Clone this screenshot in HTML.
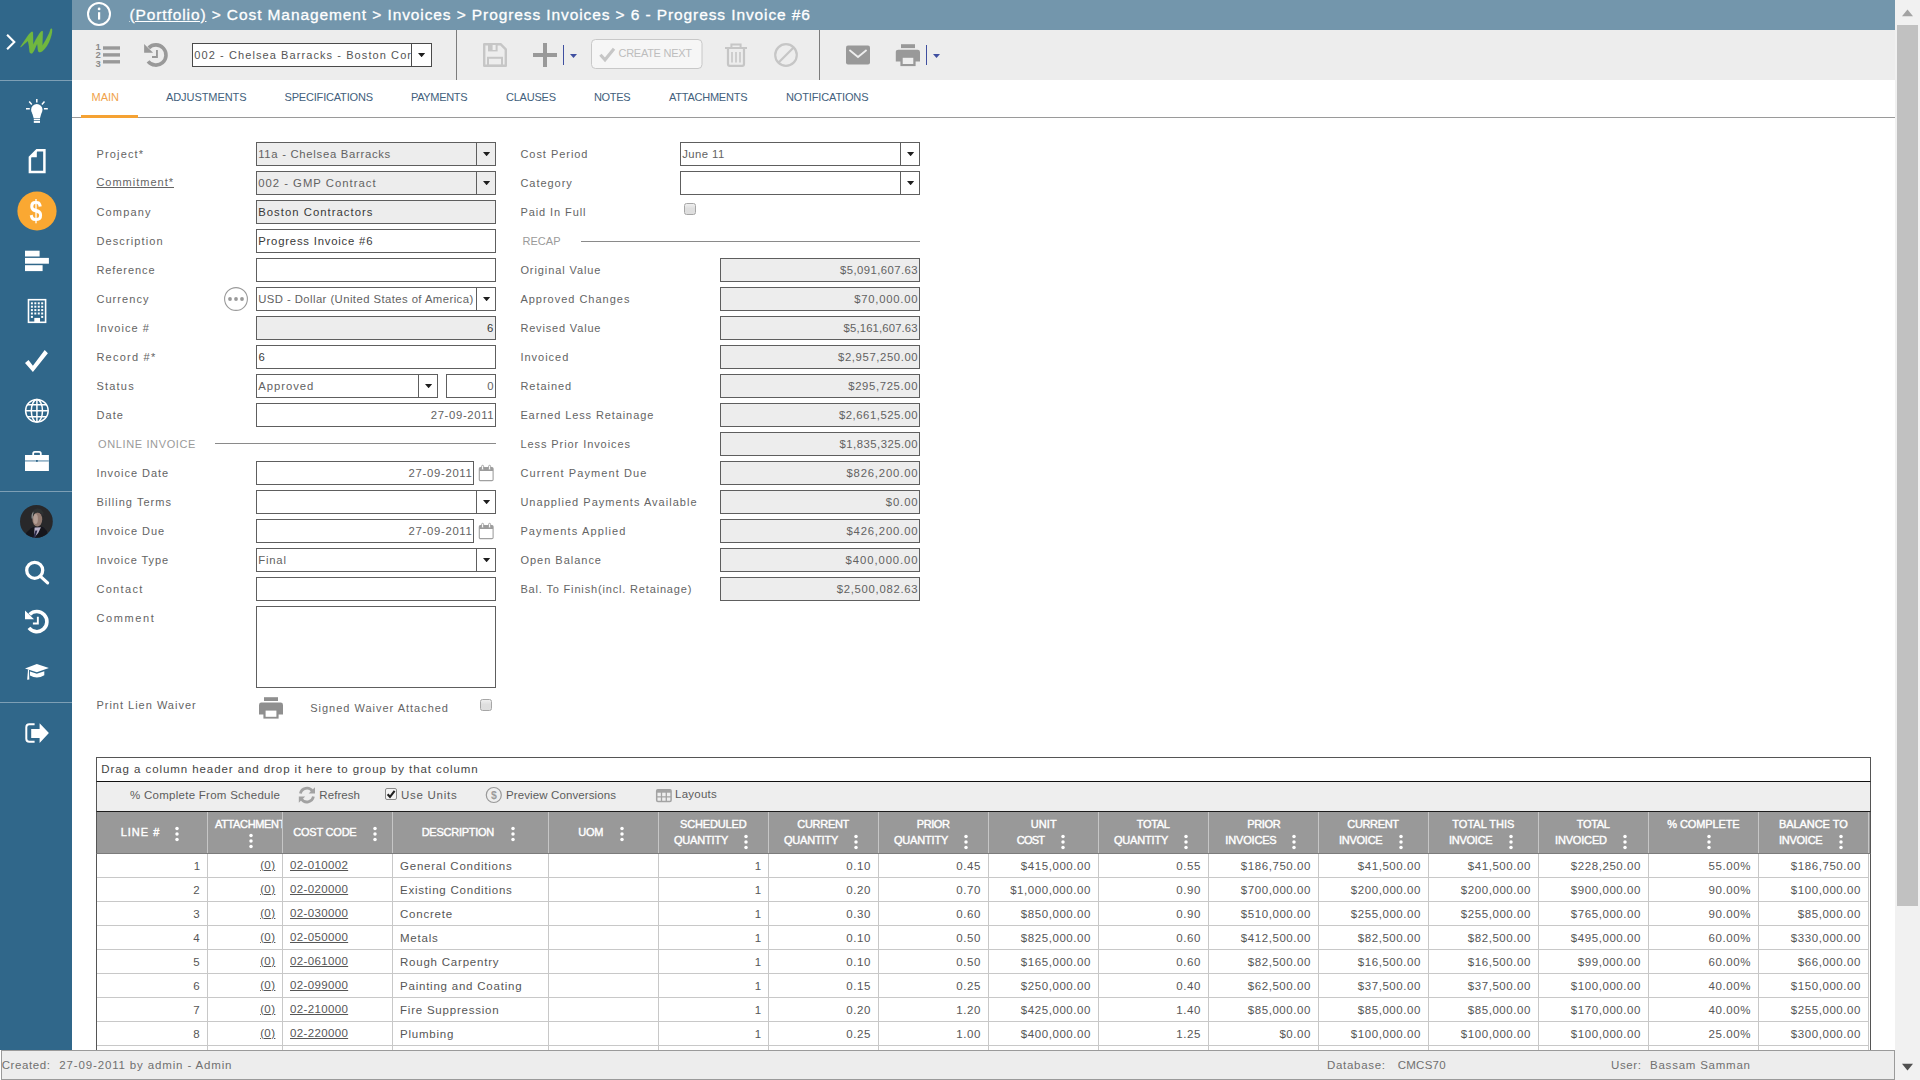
<!DOCTYPE html>
<html lang="en">
<head>
<meta charset="utf-8">
<title>6 - Progress Invoice #6</title>
<style>

html,body{margin:0;padding:0;}
body{width:1920px;height:1080px;overflow:hidden;background:#fff;position:relative;font-family:"Liberation Sans",sans-serif;font-size:12px;color:#555;}
.t{position:absolute;line-height:1;white-space:pre;}
.abs{position:absolute;}
#side{position:absolute;left:0;top:0;width:72px;height:1050px;background:#30678a;}
#side svg{position:absolute;overflow:visible;}
.sdiv{position:absolute;left:0;width:72px;height:1px;background:#7d9fb5;}
#hdr{position:absolute;left:72px;top:0;width:1823px;height:30px;background:#7396ac;}
#tb{position:absolute;left:72px;top:30px;width:1823px;height:50px;background:#ededed;}
#tabs{position:absolute;left:72px;top:80px;width:1823px;height:37px;background:#fff;border-bottom:1px solid #9a9a9a;}
.vsep{position:absolute;top:30px;width:1px;height:50px;background:#7c7c7c;}
.box{position:absolute;box-sizing:border-box;border:1px solid #5e5e5e;background:#fff;height:24px;}
.box.dis{background:#ededed;}
.dd{position:absolute;box-sizing:border-box;right:0;top:0;width:19px;height:22px;border-left:1px solid #5e5e5e;}
.dd:after{content:"";position:absolute;left:5.8px;top:8.8px;width:7.6px;height:4.4px;background:#1e1e1e;clip-path:polygon(0 0,100% 0,50% 100%);}
.hline{position:absolute;height:1px;background:#8a8a8a;}
.cb{position:absolute;box-sizing:border-box;width:12px;height:12px;border:1px solid #a6a6a6;border-radius:2.5px;background:linear-gradient(#efefef,#dfdfdf 45%,#dedede);}
#sb{position:absolute;left:1895px;top:0;width:25px;height:1080px;background:#f1f1f1;}
#sb .th{position:absolute;left:2px;top:25px;width:21px;height:881px;background:#c1c1c1;}
#status{position:absolute;left:1px;top:1050px;width:1894px;height:30px;box-sizing:border-box;background:#ededed;border:1px solid #9a9a9a;}
</style>
</head>
<body>
<div id="side">
<div class="sdiv" style="top:80px"></div><div class="sdiv" style="top:491px"></div><div class="sdiv" style="top:702px"></div>
<svg width="72" height="1050" viewBox="0 0 72 1050" style="left:0;top:0"><path d="M7.1 34.8 L14.3 42 L7.1 49.2" fill="none" stroke="#fff" stroke-width="2.1"/><path d="M20.7 46.2 L28.5 34.7 Q30.2 32.6 31.6 31.8 Q32.9 31.3 33 32.4 L33.1 37 L33.2 44.5 Q35.8 38.8 39.7 32.9 Q41 31.3 42.1 31.1 Q43 31 42.9 32 L42.7 37 L42.4 45.6 Q46.1 39.6 49.1 33.2 Q50 31 50.5 28.9 Q51.3 28.1 52.1 28.9 Q52.3 31 51.9 33.2 Q51.4 36 50.2 39.2 Q48.9 42.8 46.9 46 Q44.8 49.2 42.4 51.2 Q41 52.2 39.7 52.3 Q38.4 52.2 38.1 51 Q37.6 48.6 37.5 46 L37.1 44.1 Q36 46.6 34.9 49 Q33.9 51.4 32.6 52.9 Q31.8 53.5 31.1 53.4 Q30 53.2 29.6 52.2 Q29.1 49.2 28.9 46 L27.9 41.1 Q26.2 42.7 24.4 44.1 Q22.6 45.8 20.9 47.3 Q20 47.2 20.7 46.2 Z" fill="#70b73f" stroke="#70b73f" stroke-width="0.15" stroke-linejoin="round"/><g fill="#fff" stroke="none"><circle cx="36.8" cy="109.8" r="5.7"/><path d="M32 112.4 L41.6 112.4 L40 118.2 L33.7 118.2 Z"/><rect x="33.8" y="118.8" width="6.2" height="1.4"/><rect x="33.8" y="120.9" width="6.2" height="2"/></g><g stroke="#fff" stroke-width="1.5" fill="none"><path d="M36.8 99 V102.6 M26 108.8 H29.8 M43.9 108.8 H47.8 M29.2 101.6 L31.8 104.4 M44.5 101.6 L41.9 104.4"/></g><path d="M29.9 172 H44.4 V150.2 H36.9 L29.9 157.2 Z" fill="none" stroke="#fff" stroke-width="2.5" stroke-linejoin="miter"/><path d="M30.4 157.2 H36.8 V150.8 Z" fill="#fff"/><circle cx="37" cy="211" r="19.6" fill="#faa832"/><g fill="#fff"><rect x="25" y="250.7" width="14.6" height="5.8"/><rect x="25" y="257.9" width="23.9" height="5.8"/><rect x="25" y="265.2" width="17.6" height="5.9"/></g><g><rect x="28.5" y="299.7" width="17.1" height="22.6" fill="none" stroke="#fff" stroke-width="1.6"/><rect x="30.90" y="302.30" width="2" height="2" fill="#fff"/><rect x="34.33" y="302.30" width="2" height="2" fill="#fff"/><rect x="37.76" y="302.30" width="2" height="2" fill="#fff"/><rect x="41.19" y="302.30" width="2" height="2" fill="#fff"/><rect x="30.90" y="305.70" width="2" height="2" fill="#fff"/><rect x="34.33" y="305.70" width="2" height="2" fill="#fff"/><rect x="37.76" y="305.70" width="2" height="2" fill="#fff"/><rect x="41.19" y="305.70" width="2" height="2" fill="#fff"/><rect x="30.90" y="309.10" width="2" height="2" fill="#fff"/><rect x="34.33" y="309.10" width="2" height="2" fill="#fff"/><rect x="37.76" y="309.10" width="2" height="2" fill="#fff"/><rect x="41.19" y="309.10" width="2" height="2" fill="#fff"/><rect x="30.90" y="312.50" width="2" height="2" fill="#fff"/><rect x="34.33" y="312.50" width="2" height="2" fill="#fff"/><rect x="37.76" y="312.50" width="2" height="2" fill="#fff"/><rect x="41.19" y="312.50" width="2" height="2" fill="#fff"/><rect x="30.90" y="315.90" width="2" height="2" fill="#fff"/><rect x="41.19" y="315.90" width="2" height="2" fill="#fff"/><rect x="34.3" y="317.9" width="5.7" height="4.6" fill="#fff"/></g><path d="M25 362.9 L32.9 372 L47.9 353.2 L44.7 350.1 L32.9 365.7 L28.5 360.1 Z" fill="#fff"/><g fill="none" stroke="#fff" stroke-width="1.5"><circle cx="36.9" cy="410.8" r="11.3"/><ellipse cx="36.9" cy="410.8" rx="5.6" ry="11.3"/><path d="M36.9 399.5 V422.1 M25.6 410.8 H48.2 M27.4 404.8 H46.4 M27.4 416.8 H46.4"/></g><g><rect x="25" y="455" width="23.9" height="16" fill="#fff"/><path d="M33.2 455 V453.4 Q33.2 451.8 34.8 451.8 H39.2 Q40.8 451.8 40.8 453.4 V455" fill="none" stroke="#fff" stroke-width="1.8"/><rect x="25" y="460.1" width="23.9" height="1.6" fill="#8fb0c5"/><rect x="36" y="460" width="1.8" height="1.8" fill="#30678a"/></g><g><defs><filter id="avb" x="-20%" y="-20%" width="140%" height="140%"><feGaussianBlur stdDeviation="0.6"/></filter><clipPath id="avc"><circle cx="36.4" cy="521.4" r="16.4"/></clipPath></defs><circle cx="36.4" cy="521.4" r="16.4" fill="#28282a"/><g clip-path="url(#avc)"><g filter="url(#avb)"><path d="M24 540 Q26 529.5 34 527 L41.5 526.5 Q48 529 49.5 540 Z" fill="#13131d"/><path d="M34.6 527.6 L41 527.2 L38.2 533 L34 538 Z" fill="#b9b2c8"/><path d="M35.4 530.4 L37.4 530.6 L35 538 L33 538 Z" fill="#2b2948"/><ellipse cx="37.3" cy="519.4" rx="4.9" ry="7.2" fill="#927a70"/><ellipse cx="35.6" cy="519" rx="2.3" ry="5" fill="#c2aea4" opacity="0.7"/><path d="M31.4 518 Q30.6 509.4 37.6 508.6 Q44 508.8 43.4 516.4 Q41.4 512.4 37.4 512.6 Q33.6 512.6 32.6 518.6 Z" fill="#2e3133"/><path d="M31.6 518.6 Q31 513.2 33.6 511.4 Q32.8 514.6 32.8 518.8 Z" fill="#8d9090"/></g></g></g><g fill="none" stroke="#fff"><circle cx="34.7" cy="570.3" r="8" stroke-width="3.3"/><path d="M41 576.9 L47.6 582.9" stroke-width="3.2" stroke-linecap="round"/></g><g><path d="M29.66 614.46 A10.1 10.1 0 1 1 28.95 627.96" fill="none" stroke="#fff" stroke-width="3.6"/><path d="M25.00 610.50 V619.30 H34.00 Z" fill="#fff"/><path d="M37.85 616.70 V623.55 H32.90" fill="none" stroke="#fff" stroke-width="1.9"/></g><g fill="#fff"><path d="M25 668.4 L36.8 664 L48.9 667.9 L36.8 672.2 Z"/><path d="M30 671.4 L36.8 673.8 L44.3 671.2 V675.2 Q37 679.6 30 675.4 Z"/><path d="M28 669.4 L29 669.8 L29.3 679.4 L27.2 679.8 Z"/></g><g><path d="M34.6 724.3 H29.3 Q26.3 724.3 26.3 727.3 V738.8 Q26.3 741.8 29.3 741.8 H34.6" fill="none" stroke="#fff" stroke-width="2"/><path d="M31.2 728.9 H39.6 V723.3 L48.9 733.1 L39.6 742.9 V737.9 H31.2 Z" fill="#fff"/></g></svg>
<span class="t" style="left:28.04px;top:197.1px;font-size:29px;color:#fff;font-weight:700;transform:scaleX(0.8);transform-origin:50% 50%;">$</span>
</div>
<div id="hdr"></div><div id="tb"></div><div id="tabs"></div>
<svg class="abs" style="left:86px;top:1px" width="26" height="26" viewBox="86 1 26 26"><circle cx="99" cy="14" r="11" fill="none" stroke="#fff" stroke-width="2"/><rect x="98" y="12.2" width="2.2" height="7.4" fill="#fff"/><circle cx="99.1" cy="8.9" r="1.4" fill="#fff"/></svg>
<div class="t" style="left:129.4px;top:7px;font-size:15.5px;color:#fff;letter-spacing:0.902px;-webkit-text-stroke:0.3px #fff"><span style="text-decoration:underline">(Portfolio)</span> &gt; Cost Management &gt; Invoices &gt; Progress Invoices &gt; 6 - Progress Invoice #6</div>
<svg class="abs" style="left:72px;top:30px" width="900" height="50" viewBox="72 30 900 50"><g fill="#999"><rect x="103" y="46.3" width="17" height="3.4"/><rect x="103" y="53.2" width="17" height="3.4"/><rect x="103" y="60.1" width="17" height="3.4"/></g><g><path d="M148.76 47.86 A10.1 10.1 0 1 1 148.05 61.36" fill="none" stroke="#999" stroke-width="3.6"/><path d="M144.10 43.90 V52.70 H153.10 Z" fill="#999"/><path d="M156.95 50.10 V56.95 H152.00" fill="none" stroke="#999" stroke-width="1.9"/></g><g><path d="M484.2 44.2 H500.6 L505.8 49.4 V65.8 H484.2 Z" fill="none" stroke="#c6c6c6" stroke-width="2.4" stroke-linejoin="round"/><rect x="488" y="44.2" width="9.6" height="7.2" fill="#c6c6c6"/><rect x="492.6" y="45" width="3" height="5" fill="#eee"/><rect x="488" y="57.8" width="14" height="8" fill="none" stroke="#c6c6c6" stroke-width="2"/></g><path d="M543 43 H547 V53 H557 V57 H547 V67 H543 V57 H533 V53 H543 Z" fill="#999"/><rect x="563" y="45" width="1" height="20" fill="#3f4fa0"/><path d="M570 54 H577 L573.5 58 Z" fill="#3f4fa0"/><rect x="591.5" y="39.5" width="110.5" height="29" rx="4" fill="#f6f6f6" stroke="#c8c8c8"/><path d="M600.4 54.8 L605 59.8 L614 48.8" fill="none" stroke="#c6c6c6" stroke-width="3.1"/><g fill="none" stroke="#c6c6c6"><path d="M725 48 H747" stroke-width="2"/><path d="M731.4 47.6 V44.6 H740.6 V47.6" stroke-width="2"/><path d="M728 48.4 V64 Q728 65.8 729.8 65.8 H742.2 Q744 65.8 744 64 V48.4" stroke-width="2.2"/><path d="M732 52 V62.4 M736 52 V62.4 M740 52 V62.4" stroke-width="1.6"/></g><g fill="none" stroke="#c6c6c6" stroke-width="2.2"><circle cx="786" cy="55" r="10.8"/><path d="M778.6 62.6 L793.6 47.4"/></g><g><rect x="846" y="45.6" width="24" height="18.8" rx="2" fill="#999"/><path d="M849.4 50 L858 57 L866.6 50" fill="none" stroke="#eee" stroke-width="1.8"/></g><g fill="#999"><rect x="901" y="44.2" width="14" height="3.9"/><path d="M898.4 49.7 H917.6 Q920 49.7 920 52.1 V61.6 H895.8 V52.1 Q895.8 49.7 898.4 49.7 Z"/><rect x="900.4" y="56.2" width="15.2" height="9.9"/></g><rect x="902.7" y="57.8" width="10.6" height="6.2" fill="#eee"/><rect x="926" y="45" width="1" height="20" fill="#3f4fa0"/><path d="M933 54 H940 L936.5 58 Z" fill="#3f4fa0"/></svg>
<div class="vsep" style="left:456px"></div><div class="vsep" style="left:819px"></div>
<span class="t" style="left:95.60px;top:41.6px;font-size:9.5px;color:#8c8c8c;font-weight:700;">1</span>
<span class="t" style="left:95.60px;top:50.2px;font-size:9.5px;color:#8c8c8c;font-weight:700;">2</span>
<span class="t" style="left:95.60px;top:59px;font-size:9.5px;color:#8c8c8c;font-weight:700;">3</span>
<span class="t" style="left:618.50px;top:48px;font-size:11px;color:#bdbdbd;letter-spacing:-0.270px;">CREATE NEXT</span>
<div class="box" style="left:192px;top:43px;width:240px;height:24px;border-color:#4a4a4a"><div class="dd" style="border-color:#4a4a4a;width:20px"></div></div>
<span class="t" style="left:194.30px;top:50px;font-size:11px;color:#555;letter-spacing:1.087px;">002 - Chelsea Barracks - Boston Cor</span>
<span class="t" style="left:91.50px;top:92px;font-size:11px;color:#f0a24a;">MAIN</span>
<span class="t" style="left:166.00px;top:92px;font-size:11px;color:#42607c;letter-spacing:-0.078px;">ADJUSTMENTS</span>
<span class="t" style="left:284.50px;top:92px;font-size:11px;color:#42607c;letter-spacing:-0.182px;">SPECIFICATIONS</span>
<span class="t" style="left:411.00px;top:92px;font-size:11px;color:#42607c;letter-spacing:-0.340px;">PAYMENTS</span>
<span class="t" style="left:506.00px;top:92px;font-size:11px;color:#42607c;letter-spacing:-0.226px;">CLAUSES</span>
<span class="t" style="left:594.00px;top:92px;font-size:11px;color:#42607c;letter-spacing:-0.349px;">NOTES</span>
<span class="t" style="left:669.00px;top:92px;font-size:11px;color:#42607c;letter-spacing:-0.237px;">ATTACHMENTS</span>
<span class="t" style="left:786.00px;top:92px;font-size:11px;color:#42607c;letter-spacing:-0.136px;">NOTIFICATIONS</span>
<div class="abs" style="left:81px;top:115px;width:57px;height:2.5px;background:#f5a233"></div>
<div id="sb"><div class="th"></div><svg class="abs" style="left:0;top:0" width="25" height="1080" viewBox="0 0 25 1080"><path d="M7 16.2 L12.5 9.6 L18 16.2 Z" fill="#a3a3a3"/><path d="M7 1063.8 L12.5 1070.4 L18 1063.8 Z" fill="#505050"/></svg></div>
<div id="status"></div>
<span class="t" style="left:1.70px;top:1060px;font-size:11.5px;color:#707070;letter-spacing:0.599px;">Created:</span>
<span class="t" style="left:59.30px;top:1060px;font-size:11.5px;color:#707070;letter-spacing:0.853px;">27-09-2011 by admin - Admin</span>
<span class="t" style="left:1327.00px;top:1060px;font-size:11.5px;color:#707070;letter-spacing:0.697px;">Database:</span>
<span class="t" style="left:1397.70px;top:1060px;font-size:11.5px;color:#707070;letter-spacing:0.269px;">CMCS70</span>
<span class="t" style="left:1611.00px;top:1060px;font-size:11.5px;color:#707070;letter-spacing:0.631px;">User:</span>
<span class="t" style="left:1650.00px;top:1060px;font-size:11.5px;color:#707070;letter-spacing:0.770px;">Bassam Samman</span>
<span class="t" style="left:96.40px;top:149px;font-size:11px;color:#646464;letter-spacing:1.169px;">Project*</span>
<span class="t" style="left:96.40px;top:177px;font-size:11px;color:#646464;letter-spacing:0.998px;text-decoration:underline;">Commitment*</span>
<span class="t" style="left:96.40px;top:207px;font-size:11px;color:#646464;letter-spacing:1.187px;">Company</span>
<span class="t" style="left:96.40px;top:236px;font-size:11px;color:#646464;letter-spacing:1.128px;">Description</span>
<span class="t" style="left:96.40px;top:265px;font-size:11px;color:#646464;letter-spacing:0.931px;">Reference</span>
<span class="t" style="left:96.40px;top:294px;font-size:11px;color:#646464;letter-spacing:1.082px;">Currency</span>
<span class="t" style="left:96.40px;top:323px;font-size:11px;color:#646464;letter-spacing:1.059px;">Invoice #</span>
<span class="t" style="left:96.40px;top:352px;font-size:11px;color:#646464;letter-spacing:1.236px;">Record #*</span>
<span class="t" style="left:96.40px;top:381px;font-size:11px;color:#646464;letter-spacing:1.223px;">Status</span>
<span class="t" style="left:96.40px;top:410px;font-size:11px;color:#646464;letter-spacing:1.121px;">Date</span>
<span class="t" style="left:96.40px;top:468px;font-size:11px;color:#646464;letter-spacing:0.960px;">Invoice Date</span>
<span class="t" style="left:96.40px;top:497px;font-size:11px;color:#646464;letter-spacing:1.037px;">Billing Terms</span>
<span class="t" style="left:96.40px;top:526px;font-size:11px;color:#646464;letter-spacing:0.961px;">Invoice Due</span>
<span class="t" style="left:96.40px;top:555px;font-size:11px;color:#646464;letter-spacing:0.922px;">Invoice Type</span>
<span class="t" style="left:96.40px;top:584px;font-size:11px;color:#646464;letter-spacing:1.332px;">Contact</span>
<span class="t" style="left:96.40px;top:613px;font-size:11px;color:#646464;letter-spacing:1.620px;">Comment</span>
<span class="t" style="left:96.40px;top:700px;font-size:11px;color:#646464;letter-spacing:0.997px;">Print Lien Waiver</span>
<div class="box dis" style="left:256px;top:142px;width:240px;height:24px"><div class="dd"></div></div>
<span class="t" style="left:258.20px;top:149px;font-size:11.3px;color:#626262;letter-spacing:0.708px;">11a - Chelsea Barracks</span>
<div class="box dis" style="left:256px;top:171px;width:240px;height:24px"><div class="dd"></div></div>
<span class="t" style="left:258.20px;top:178px;font-size:11.3px;color:#626262;letter-spacing:1.007px;">002 - GMP Contract</span>
<div class="box dis" style="left:256px;top:200px;width:240px;height:24px"></div>
<span class="t" style="left:258.20px;top:207px;font-size:11.3px;color:#383838;letter-spacing:1.034px;">Boston Contractors</span>
<div class="box" style="left:256px;top:229px;width:240px;height:24px"></div>
<span class="t" style="left:258.20px;top:236px;font-size:11.3px;color:#383838;letter-spacing:0.802px;">Progress Invoice #6</span>
<div class="box" style="left:256px;top:258px;width:240px;height:24px"></div>
<svg class="abs" style="left:222px;top:286px" width="28" height="26" viewBox="222 286 28 26"><circle cx="236" cy="299" r="11.4" fill="#fff" stroke="#9a9a9a" stroke-width="1.1"/><circle cx="230" cy="299" r="1.9" fill="#999"/><circle cx="236" cy="299" r="1.9" fill="#999"/><circle cx="242" cy="299" r="1.9" fill="#999"/></svg>
<div class="box" style="left:256px;top:287px;width:240px;height:24px"><div class="dd"></div></div>
<span class="t" style="left:258.20px;top:294px;font-size:11.3px;color:#626262;letter-spacing:0.436px;">USD - Dollar (United States of America)</span>
<div class="box dis" style="left:256px;top:316px;width:240px;height:24px"></div>
<span class="t" style="left:487.02px;top:323px;font-size:11.3px;color:#383838;">6</span>
<div class="box" style="left:256px;top:345px;width:240px;height:24px"></div>
<span class="t" style="left:258.60px;top:352px;font-size:11.3px;color:#383838;">6</span>
<div class="box" style="left:256px;top:374px;width:182px;height:24px"><div class="dd"></div></div>
<span class="t" style="left:258.20px;top:381px;font-size:11.3px;color:#626262;letter-spacing:0.975px;">Approved</span>
<div class="box" style="left:446px;top:374px;width:50px;height:24px"></div>
<span class="t" style="left:487.22px;top:381px;font-size:11.3px;color:#626262;">0</span>
<div class="box" style="left:256px;top:403px;width:240px;height:24px"></div>
<span class="t" style="left:430.70px;top:410px;font-size:11.3px;color:#626262;letter-spacing:0.659px;">27-09-2011</span>
<span class="t" style="left:98.00px;top:439px;font-size:11px;color:#9a9a9a;letter-spacing:0.628px;">ONLINE INVOICE</span>
<div class="hline" style="left:215px;top:443px;width:281px"></div>
<div class="box" style="left:256px;top:461px;width:218px;height:24px"></div>
<span class="t" style="left:408.60px;top:468px;font-size:11.3px;color:#626262;letter-spacing:0.693px;">27-09-2011</span>
<svg class="abs" style="left:478px;top:464px" width="16" height="18" viewBox="0 0 16 18"><rect x="1.3" y="3.6" width="13.8" height="13" rx="1.2" fill="#fff" stroke="#a0a0a0" stroke-width="1.1"/><path d="M1.3 4.8 Q1.3 3.6 2.5 3.6 H13.9 Q15.1 3.6 15.1 4.8 V7 H1.3 Z" fill="#9c9c9c"/><rect x="3.6" y="1.3" width="2" height="4.6" rx="1" fill="#fff" stroke="#9c9c9c" stroke-width="0.9"/><rect x="10.6" y="1.3" width="2" height="4.6" rx="1" fill="#fff" stroke="#9c9c9c" stroke-width="0.9"/></svg>
<div class="box" style="left:256px;top:490px;width:240px;height:24px"><div class="dd"></div></div>
<div class="box" style="left:256px;top:519px;width:218px;height:24px"></div>
<span class="t" style="left:408.60px;top:526px;font-size:11.3px;color:#626262;letter-spacing:0.693px;">27-09-2011</span>
<svg class="abs" style="left:478px;top:522px" width="16" height="18" viewBox="0 0 16 18"><rect x="1.3" y="3.6" width="13.8" height="13" rx="1.2" fill="#fff" stroke="#a0a0a0" stroke-width="1.1"/><path d="M1.3 4.8 Q1.3 3.6 2.5 3.6 H13.9 Q15.1 3.6 15.1 4.8 V7 H1.3 Z" fill="#9c9c9c"/><rect x="3.6" y="1.3" width="2" height="4.6" rx="1" fill="#fff" stroke="#9c9c9c" stroke-width="0.9"/><rect x="10.6" y="1.3" width="2" height="4.6" rx="1" fill="#fff" stroke="#9c9c9c" stroke-width="0.9"/></svg>
<div class="box" style="left:256px;top:548px;width:240px;height:24px"><div class="dd"></div></div>
<span class="t" style="left:258.20px;top:555px;font-size:11.3px;color:#626262;letter-spacing:0.827px;">Final</span>
<div class="box" style="left:256px;top:577px;width:240px;height:24px"></div>
<div class="box" style="left:256px;top:606px;width:240px;height:82px"></div>
<svg class="abs" style="left:257px;top:696px" width="28" height="24" viewBox="257 696 28 24"><g fill="#8f8f8f"><rect x="264" y="697.2" width="14" height="3.8"/><path d="M261.4 702.6 H280.6 Q283 702.6 283 705 V714.4 H259 V705 Q259 702.6 261.4 702.6 Z"/><rect x="263.4" y="709.4" width="15.2" height="9.2"/></g><rect x="265.6" y="710.6" width="10.8" height="6.2" fill="#fff"/></svg>
<span class="t" style="left:310.20px;top:703px;font-size:11px;color:#646464;letter-spacing:0.991px;">Signed Waiver Attached</span>
<div class="cb" style="left:480px;top:699px"></div>
<span class="t" style="left:520.40px;top:149px;font-size:11px;color:#646464;letter-spacing:0.963px;">Cost Period</span>
<span class="t" style="left:520.40px;top:178px;font-size:11px;color:#646464;letter-spacing:0.966px;">Category</span>
<span class="t" style="left:520.40px;top:207px;font-size:11px;color:#646464;letter-spacing:0.916px;">Paid In Full</span>
<span class="t" style="left:520.40px;top:265px;font-size:11px;color:#646464;letter-spacing:0.909px;">Original Value</span>
<span class="t" style="left:520.40px;top:294px;font-size:11px;color:#646464;letter-spacing:0.988px;">Approved Changes</span>
<span class="t" style="left:520.40px;top:323px;font-size:11px;color:#646464;letter-spacing:0.832px;">Revised Value</span>
<span class="t" style="left:520.40px;top:352px;font-size:11px;color:#646464;letter-spacing:0.990px;">Invoiced</span>
<span class="t" style="left:520.40px;top:381px;font-size:11px;color:#646464;letter-spacing:0.967px;">Retained</span>
<span class="t" style="left:520.40px;top:410px;font-size:11px;color:#646464;letter-spacing:0.896px;">Earned Less Retainage</span>
<span class="t" style="left:520.40px;top:439px;font-size:11px;color:#646464;letter-spacing:0.926px;">Less Prior Invoices</span>
<span class="t" style="left:520.40px;top:468px;font-size:11px;color:#646464;letter-spacing:1.090px;">Current Payment Due</span>
<span class="t" style="left:520.40px;top:497px;font-size:11px;color:#646464;letter-spacing:1.030px;">Unapplied Payments Available</span>
<span class="t" style="left:520.40px;top:526px;font-size:11px;color:#646464;letter-spacing:1.130px;">Payments Applied</span>
<span class="t" style="left:520.40px;top:555px;font-size:11px;color:#646464;letter-spacing:0.989px;">Open Balance</span>
<span class="t" style="left:520.40px;top:584px;font-size:11px;color:#646464;letter-spacing:0.836px;">Bal. To Finish(incl. Retainage)</span>
<div class="box" style="left:680px;top:142px;width:240px;height:24px"><div class="dd"></div></div>
<span class="t" style="left:682.30px;top:149px;font-size:11.3px;color:#626262;letter-spacing:0.421px;">June 11</span>
<div class="box" style="left:680px;top:171px;width:240px;height:24px"><div class="dd"></div></div>
<div class="cb" style="left:684px;top:203px"></div>
<span class="t" style="left:522.40px;top:236px;font-size:11px;color:#9a9a9a;letter-spacing:0.050px;">RECAP</span>
<div class="hline" style="left:581px;top:241px;width:339px"></div>
<div class="box dis" style="left:720px;top:258px;width:200px;height:24px"></div>
<span class="t" style="left:840.10px;top:265px;font-size:11.3px;color:#626262;letter-spacing:0.436px;">$5,091,607.63</span>
<div class="box dis" style="left:720px;top:287px;width:200px;height:24px"></div>
<span class="t" style="left:854.20px;top:294px;font-size:11.3px;color:#626262;letter-spacing:0.760px;">$70,000.00</span>
<div class="box dis" style="left:720px;top:316px;width:200px;height:24px"></div>
<span class="t" style="left:843.60px;top:323px;font-size:11.3px;color:#626262;letter-spacing:0.145px;">$5,161,607.63</span>
<div class="box dis" style="left:720px;top:345px;width:200px;height:24px"></div>
<span class="t" style="left:838.10px;top:352px;font-size:11.3px;color:#626262;letter-spacing:0.603px;">$2,957,250.00</span>
<div class="box dis" style="left:720px;top:374px;width:200px;height:24px"></div>
<span class="t" style="left:848.20px;top:381px;font-size:11.3px;color:#626262;letter-spacing:0.656px;">$295,725.00</span>
<div class="box dis" style="left:720px;top:403px;width:200px;height:24px"></div>
<span class="t" style="left:839.00px;top:410px;font-size:11.3px;color:#626262;letter-spacing:0.528px;">$2,661,525.00</span>
<div class="box dis" style="left:720px;top:432px;width:200px;height:24px"></div>
<span class="t" style="left:839.60px;top:439px;font-size:11.3px;color:#626262;letter-spacing:0.478px;">$1,835,325.00</span>
<div class="box dis" style="left:720px;top:461px;width:200px;height:24px"></div>
<span class="t" style="left:846.40px;top:468px;font-size:11.3px;color:#626262;letter-spacing:0.836px;">$826,200.00</span>
<div class="box dis" style="left:720px;top:490px;width:200px;height:24px"></div>
<span class="t" style="left:885.80px;top:497px;font-size:11.3px;color:#626262;letter-spacing:0.880px;">$0.00</span>
<div class="box dis" style="left:720px;top:519px;width:200px;height:24px"></div>
<span class="t" style="left:846.40px;top:526px;font-size:11.3px;color:#626262;letter-spacing:0.836px;">$426,200.00</span>
<div class="box dis" style="left:720px;top:548px;width:200px;height:24px"></div>
<span class="t" style="left:845.60px;top:555px;font-size:11.3px;color:#626262;letter-spacing:0.916px;">$400,000.00</span>
<div class="box dis" style="left:720px;top:577px;width:200px;height:24px"></div>
<span class="t" style="left:836.70px;top:584px;font-size:11.3px;color:#626262;letter-spacing:0.720px;">$2,500,082.63</span>
<div class="abs" style="left:96px;top:757px;width:1775px;height:25px;box-sizing:border-box;border:1px solid #555;border-bottom:1px solid #111;background:#fff"></div>
<span class="t" style="left:101.30px;top:764px;font-size:11.5px;color:#444;letter-spacing:0.925px;">Drag a column header and drop it here to group by that column</span>
<div class="abs" style="left:96px;top:782px;width:1775px;height:29px;box-sizing:border-box;border-left:1px solid #555;border-right:1px solid #555;background:#eeeeee"></div>
<span class="t" style="left:130.00px;top:790px;font-size:11.5px;color:#5c5c5c;letter-spacing:0.269px;">% Complete From Schedule</span>
<svg class="abs" style="left:298px;top:786px" width="18" height="18" viewBox="298 786 18 18"><g fill="none" stroke="#a2a2a2" stroke-width="2.8"><path d="M300.4 793.6 A6.6 6.6 0 0 1 312.4 791.2"/><path d="M313.4 796.6 A6.6 6.6 0 0 1 301.4 799"/></g><path d="M315 787.2 V793.6 H308.6 Z" fill="#a2a2a2"/><path d="M298.8 802.8 V796.4 H305.2 Z" fill="#a2a2a2"/></svg>
<span class="t" style="left:319.30px;top:790px;font-size:11.5px;color:#5c5c5c;letter-spacing:0.072px;">Refresh</span>
<div class="abs" style="left:385px;top:788px;width:12px;height:12px;box-sizing:border-box;border:1px solid #8a8a8a;border-radius:2px;background:#f4f4f4"></div>
<svg class="abs" style="left:385px;top:788px" width="12" height="12" viewBox="0 0 12 12"><path d="M2.6 6.2 L5 8.8 L9.6 2.8" fill="none" stroke="#222" stroke-width="2.1"/></svg>
<span class="t" style="left:401.00px;top:790px;font-size:11.5px;color:#5c5c5c;letter-spacing:0.732px;">Use Units</span>
<svg class="abs" style="left:485px;top:786px" width="18" height="18" viewBox="485 786 18 18"><circle cx="493.8" cy="795" r="7.5" fill="none" stroke="#999" stroke-width="1.2"/></svg>
<span class="t" style="left:490.88px;top:789.8px;font-size:10.5px;color:#9a9a9a;font-weight:700;">$</span>
<span class="t" style="left:506.00px;top:790px;font-size:11.5px;color:#5c5c5c;letter-spacing:0.110px;">Preview Conversions</span>
<svg class="abs" style="left:655px;top:788px" width="18" height="15" viewBox="655 788 18 15"><rect x="656.7" y="789.7" width="14.4" height="11.8" rx="1.2" fill="none" stroke="#a3a3a3" stroke-width="1.5"/><rect x="656.7" y="789.7" width="14.4" height="3" fill="#a3a3a3"/><path d="M656.6 796.9 H671.2 M661.5 792 V801.4 M666.3 792 V801.4" stroke="#a3a3a3" stroke-width="1.3" fill="none"/></svg>
<span class="t" style="left:675.00px;top:789px;font-size:11.5px;color:#5c5c5c;letter-spacing:0.237px;">Layouts</span>
<div class="abs" style="left:96px;top:811px;width:1775px;height:43px;box-sizing:border-box;border-left:1px solid #555;border-right:1px solid #555;border-top:1px solid #1c1c1c;border-bottom:1px solid #7c7c7c;background:#999"></div>
<div class="abs" style="left:207px;top:812px;width:1px;height:41px;background:#c6c6c6"></div>
<div class="abs" style="left:282px;top:812px;width:1px;height:41px;background:#c6c6c6"></div>
<div class="abs" style="left:392px;top:812px;width:1px;height:41px;background:#c6c6c6"></div>
<div class="abs" style="left:548px;top:812px;width:1px;height:41px;background:#c6c6c6"></div>
<div class="abs" style="left:658px;top:812px;width:1px;height:41px;background:#c6c6c6"></div>
<div class="abs" style="left:768px;top:812px;width:1px;height:41px;background:#c6c6c6"></div>
<div class="abs" style="left:878px;top:812px;width:1px;height:41px;background:#c6c6c6"></div>
<div class="abs" style="left:988px;top:812px;width:1px;height:41px;background:#c6c6c6"></div>
<div class="abs" style="left:1098px;top:812px;width:1px;height:41px;background:#c6c6c6"></div>
<div class="abs" style="left:1208px;top:812px;width:1px;height:41px;background:#c6c6c6"></div>
<div class="abs" style="left:1318px;top:812px;width:1px;height:41px;background:#c6c6c6"></div>
<div class="abs" style="left:1428px;top:812px;width:1px;height:41px;background:#c6c6c6"></div>
<div class="abs" style="left:1538px;top:812px;width:1px;height:41px;background:#c6c6c6"></div>
<div class="abs" style="left:1648px;top:812px;width:1px;height:41px;background:#c6c6c6"></div>
<div class="abs" style="left:1758px;top:812px;width:1px;height:41px;background:#c6c6c6"></div>
<div class="abs" style="left:1868px;top:812px;width:1px;height:41px;background:#c6c6c6"></div>
<span class="t" style="left:120.70px;top:827px;font-size:11px;color:#fff;letter-spacing:0.994px;-webkit-text-stroke:0.4px #fff;">LINE #</span>
<svg class="abs" style="left:174.7px;top:826px" width="4" height="16" viewBox="0 0 4 16"><circle cx="2" cy="2.6" r="1.75" fill="#fff"/><circle cx="2" cy="8" r="1.75" fill="#fff"/><circle cx="2" cy="13.4" r="1.75" fill="#fff"/></svg>
<div class="abs" style="left:208px;top:812px;width:74px;height:41px;overflow:hidden"><span class="t" style="left:7.00px;top:7px;font-size:11px;color:#fff;letter-spacing:-0.352px;-webkit-text-stroke:0.4px #fff;">ATTACHMENTS</span></div>
<svg class="abs" style="left:248.7px;top:833px" width="4" height="16" viewBox="0 0 4 16"><circle cx="2" cy="2.6" r="1.75" fill="#fff"/><circle cx="2" cy="8" r="1.75" fill="#fff"/><circle cx="2" cy="13.4" r="1.75" fill="#fff"/></svg>
<span class="t" style="left:293.30px;top:827px;font-size:11px;color:#fff;letter-spacing:-0.224px;-webkit-text-stroke:0.4px #fff;">COST CODE</span>
<svg class="abs" style="left:372.7px;top:826px" width="4" height="16" viewBox="0 0 4 16"><circle cx="2" cy="2.6" r="1.75" fill="#fff"/><circle cx="2" cy="8" r="1.75" fill="#fff"/><circle cx="2" cy="13.4" r="1.75" fill="#fff"/></svg>
<span class="t" style="left:421.70px;top:827px;font-size:11px;color:#fff;letter-spacing:-0.258px;-webkit-text-stroke:0.4px #fff;">DESCRIPTION</span>
<svg class="abs" style="left:510.70000000000005px;top:826px" width="4" height="16" viewBox="0 0 4 16"><circle cx="2" cy="2.6" r="1.75" fill="#fff"/><circle cx="2" cy="8" r="1.75" fill="#fff"/><circle cx="2" cy="13.4" r="1.75" fill="#fff"/></svg>
<span class="t" style="left:578.30px;top:827px;font-size:11px;color:#fff;letter-spacing:-0.332px;-webkit-text-stroke:0.4px #fff;">UOM</span>
<svg class="abs" style="left:619.7px;top:826px" width="4" height="16" viewBox="0 0 4 16"><circle cx="2" cy="2.6" r="1.75" fill="#fff"/><circle cx="2" cy="8" r="1.75" fill="#fff"/><circle cx="2" cy="13.4" r="1.75" fill="#fff"/></svg>
<span class="t" style="left:680.00px;top:819px;font-size:11px;color:#fff;letter-spacing:-0.144px;-webkit-text-stroke:0.4px #fff;">SCHEDULED</span>
<span class="t" style="left:674.00px;top:835px;font-size:11px;color:#fff;letter-spacing:-0.188px;-webkit-text-stroke:0.4px #fff;">QUANTITY</span>
<svg class="abs" style="left:743.7px;top:834px" width="4" height="16" viewBox="0 0 4 16"><circle cx="2" cy="2.6" r="1.75" fill="#fff"/><circle cx="2" cy="8" r="1.75" fill="#fff"/><circle cx="2" cy="13.4" r="1.75" fill="#fff"/></svg>
<span class="t" style="left:797.30px;top:819px;font-size:11px;color:#fff;letter-spacing:-0.296px;-webkit-text-stroke:0.4px #fff;">CURRENT</span>
<span class="t" style="left:784.00px;top:835px;font-size:11px;color:#fff;letter-spacing:-0.188px;-webkit-text-stroke:0.4px #fff;">QUANTITY</span>
<svg class="abs" style="left:853.7px;top:834px" width="4" height="16" viewBox="0 0 4 16"><circle cx="2" cy="2.6" r="1.75" fill="#fff"/><circle cx="2" cy="8" r="1.75" fill="#fff"/><circle cx="2" cy="13.4" r="1.75" fill="#fff"/></svg>
<span class="t" style="left:916.70px;top:819px;font-size:11px;color:#fff;letter-spacing:-0.384px;-webkit-text-stroke:0.4px #fff;">PRIOR</span>
<span class="t" style="left:894.00px;top:835px;font-size:11px;color:#fff;letter-spacing:-0.188px;-webkit-text-stroke:0.4px #fff;">QUANTITY</span>
<svg class="abs" style="left:963.7px;top:834px" width="4" height="16" viewBox="0 0 4 16"><circle cx="2" cy="2.6" r="1.75" fill="#fff"/><circle cx="2" cy="8" r="1.75" fill="#fff"/><circle cx="2" cy="13.4" r="1.75" fill="#fff"/></svg>
<span class="t" style="left:1030.70px;top:819px;font-size:11px;color:#fff;letter-spacing:0.112px;-webkit-text-stroke:0.4px #fff;">UNIT</span>
<span class="t" style="left:1016.70px;top:835px;font-size:11px;color:#fff;letter-spacing:-0.752px;-webkit-text-stroke:0.4px #fff;">COST</span>
<svg class="abs" style="left:1061.3px;top:834px" width="4" height="16" viewBox="0 0 4 16"><circle cx="2" cy="2.6" r="1.75" fill="#fff"/><circle cx="2" cy="8" r="1.75" fill="#fff"/><circle cx="2" cy="13.4" r="1.75" fill="#fff"/></svg>
<span class="t" style="left:1136.70px;top:819px;font-size:11px;color:#fff;letter-spacing:-0.284px;-webkit-text-stroke:0.4px #fff;">TOTAL</span>
<span class="t" style="left:1114.00px;top:835px;font-size:11px;color:#fff;letter-spacing:-0.188px;-webkit-text-stroke:0.4px #fff;">QUANTITY</span>
<svg class="abs" style="left:1183.7px;top:834px" width="4" height="16" viewBox="0 0 4 16"><circle cx="2" cy="2.6" r="1.75" fill="#fff"/><circle cx="2" cy="8" r="1.75" fill="#fff"/><circle cx="2" cy="13.4" r="1.75" fill="#fff"/></svg>
<span class="t" style="left:1247.30px;top:819px;font-size:11px;color:#fff;letter-spacing:-0.384px;-webkit-text-stroke:0.4px #fff;">PRIOR</span>
<span class="t" style="left:1225.30px;top:835px;font-size:11px;color:#fff;letter-spacing:-0.167px;-webkit-text-stroke:0.4px #fff;">INVOICES</span>
<svg class="abs" style="left:1292.3px;top:834px" width="4" height="16" viewBox="0 0 4 16"><circle cx="2" cy="2.6" r="1.75" fill="#fff"/><circle cx="2" cy="8" r="1.75" fill="#fff"/><circle cx="2" cy="13.4" r="1.75" fill="#fff"/></svg>
<span class="t" style="left:1347.30px;top:819px;font-size:11px;color:#fff;letter-spacing:-0.346px;-webkit-text-stroke:0.4px #fff;">CURRENT</span>
<span class="t" style="left:1339.00px;top:835px;font-size:11px;color:#fff;letter-spacing:-0.255px;-webkit-text-stroke:0.4px #fff;">INVOICE</span>
<svg class="abs" style="left:1399px;top:834px" width="4" height="16" viewBox="0 0 4 16"><circle cx="2" cy="2.6" r="1.75" fill="#fff"/><circle cx="2" cy="8" r="1.75" fill="#fff"/><circle cx="2" cy="13.4" r="1.75" fill="#fff"/></svg>
<span class="t" style="left:1452.30px;top:819px;font-size:11px;color:#fff;letter-spacing:0.007px;-webkit-text-stroke:0.4px #fff;">TOTAL THIS</span>
<span class="t" style="left:1449.00px;top:835px;font-size:11px;color:#fff;letter-spacing:-0.255px;-webkit-text-stroke:0.4px #fff;">INVOICE</span>
<svg class="abs" style="left:1508.7px;top:834px" width="4" height="16" viewBox="0 0 4 16"><circle cx="2" cy="2.6" r="1.75" fill="#fff"/><circle cx="2" cy="8" r="1.75" fill="#fff"/><circle cx="2" cy="13.4" r="1.75" fill="#fff"/></svg>
<span class="t" style="left:1576.70px;top:819px;font-size:11px;color:#fff;letter-spacing:-0.284px;-webkit-text-stroke:0.4px #fff;">TOTAL</span>
<span class="t" style="left:1555.00px;top:835px;font-size:11px;color:#fff;letter-spacing:-0.168px;-webkit-text-stroke:0.4px #fff;">INVOICED</span>
<svg class="abs" style="left:1623px;top:834px" width="4" height="16" viewBox="0 0 4 16"><circle cx="2" cy="2.6" r="1.75" fill="#fff"/><circle cx="2" cy="8" r="1.75" fill="#fff"/><circle cx="2" cy="13.4" r="1.75" fill="#fff"/></svg>
<span class="t" style="left:1779.00px;top:819px;font-size:11px;color:#fff;letter-spacing:-0.066px;-webkit-text-stroke:0.4px #fff;">BALANCE TO</span>
<span class="t" style="left:1779.00px;top:835px;font-size:11px;color:#fff;letter-spacing:-0.255px;-webkit-text-stroke:0.4px #fff;">INVOICE</span>
<svg class="abs" style="left:1839px;top:834px" width="4" height="16" viewBox="0 0 4 16"><circle cx="2" cy="2.6" r="1.75" fill="#fff"/><circle cx="2" cy="8" r="1.75" fill="#fff"/><circle cx="2" cy="13.4" r="1.75" fill="#fff"/></svg>
<span class="t" style="left:1667.30px;top:819px;font-size:11px;color:#fff;letter-spacing:-0.105px;-webkit-text-stroke:0.4px #fff;">% COMPLETE</span>
<svg class="abs" style="left:1707px;top:833.5px" width="4" height="16" viewBox="0 0 4 16"><circle cx="2" cy="2.6" r="1.75" fill="#fff"/><circle cx="2" cy="8" r="1.75" fill="#fff"/><circle cx="2" cy="13.4" r="1.75" fill="#fff"/></svg>
<div class="abs" style="left:96px;top:854px;width:1775px;height:196px;box-sizing:border-box;border-left:1px solid #555;border-right:1px solid #555;background:#fff"></div>
<div class="abs" style="left:207px;top:854px;width:1px;height:196px;background:#c8c8c8"></div>
<div class="abs" style="left:282px;top:854px;width:1px;height:196px;background:#c8c8c8"></div>
<div class="abs" style="left:392px;top:854px;width:1px;height:196px;background:#c8c8c8"></div>
<div class="abs" style="left:548px;top:854px;width:1px;height:196px;background:#c8c8c8"></div>
<div class="abs" style="left:658px;top:854px;width:1px;height:196px;background:#c8c8c8"></div>
<div class="abs" style="left:768px;top:854px;width:1px;height:196px;background:#c8c8c8"></div>
<div class="abs" style="left:878px;top:854px;width:1px;height:196px;background:#c8c8c8"></div>
<div class="abs" style="left:988px;top:854px;width:1px;height:196px;background:#c8c8c8"></div>
<div class="abs" style="left:1098px;top:854px;width:1px;height:196px;background:#c8c8c8"></div>
<div class="abs" style="left:1208px;top:854px;width:1px;height:196px;background:#c8c8c8"></div>
<div class="abs" style="left:1318px;top:854px;width:1px;height:196px;background:#c8c8c8"></div>
<div class="abs" style="left:1428px;top:854px;width:1px;height:196px;background:#c8c8c8"></div>
<div class="abs" style="left:1538px;top:854px;width:1px;height:196px;background:#c8c8c8"></div>
<div class="abs" style="left:1648px;top:854px;width:1px;height:196px;background:#c8c8c8"></div>
<div class="abs" style="left:1758px;top:854px;width:1px;height:196px;background:#c8c8c8"></div>
<div class="abs" style="left:1868px;top:854px;width:1px;height:196px;background:#c8c8c8"></div>
<div class="abs" style="left:97px;top:877px;width:1772px;height:1px;background:#c8c8c8"></div>
<span class="t" style="left:193.80px;top:861px;font-size:11.5px;color:#565656;">1</span>
<span class="t" style="left:260.14px;top:860px;font-size:11.5px;color:#565656;letter-spacing:0.400px;text-decoration:underline;">(0)</span>
<span class="t" style="left:290.00px;top:860px;font-size:11.5px;color:#565656;letter-spacing:0.350px;text-decoration:underline;">02-010002</span>
<span class="t" style="left:400.00px;top:861px;font-size:11.5px;color:#565656;letter-spacing:0.780px;">General Conditions</span>
<span class="t" style="left:754.80px;top:861px;font-size:11.5px;color:#565656;letter-spacing:0.560px;">1</span>
<span class="t" style="left:846.34px;top:861px;font-size:11.5px;color:#565656;letter-spacing:0.560px;">0.10</span>
<span class="t" style="left:956.34px;top:861px;font-size:11.5px;color:#565656;letter-spacing:0.560px;">0.45</span>
<span class="t" style="left:1020.85px;top:861px;font-size:11.5px;color:#565656;letter-spacing:0.560px;">$415,000.00</span>
<span class="t" style="left:1176.34px;top:861px;font-size:11.5px;color:#565656;letter-spacing:0.560px;">0.55</span>
<span class="t" style="left:1240.85px;top:861px;font-size:11.5px;color:#565656;letter-spacing:0.560px;">$186,750.00</span>
<span class="t" style="left:1357.80px;top:861px;font-size:11.5px;color:#565656;letter-spacing:0.560px;">$41,500.00</span>
<span class="t" style="left:1467.80px;top:861px;font-size:11.5px;color:#565656;letter-spacing:0.560px;">$41,500.00</span>
<span class="t" style="left:1570.85px;top:861px;font-size:11.5px;color:#565656;letter-spacing:0.560px;">$228,250.00</span>
<span class="t" style="left:1708.60px;top:861px;font-size:11.5px;color:#565656;letter-spacing:0.560px;">55.00%</span>
<span class="t" style="left:1790.85px;top:861px;font-size:11.5px;color:#565656;letter-spacing:0.560px;">$186,750.00</span>
<div class="abs" style="left:97px;top:901px;width:1772px;height:1px;background:#c8c8c8"></div>
<span class="t" style="left:193.20px;top:885px;font-size:11.5px;color:#565656;">2</span>
<span class="t" style="left:260.14px;top:884px;font-size:11.5px;color:#565656;letter-spacing:0.400px;text-decoration:underline;">(0)</span>
<span class="t" style="left:290.00px;top:884px;font-size:11.5px;color:#565656;letter-spacing:0.350px;text-decoration:underline;">02-020000</span>
<span class="t" style="left:400.00px;top:885px;font-size:11.5px;color:#565656;letter-spacing:0.780px;">Existing Conditions</span>
<span class="t" style="left:754.80px;top:885px;font-size:11.5px;color:#565656;letter-spacing:0.560px;">1</span>
<span class="t" style="left:846.34px;top:885px;font-size:11.5px;color:#565656;letter-spacing:0.560px;">0.20</span>
<span class="t" style="left:956.34px;top:885px;font-size:11.5px;color:#565656;letter-spacing:0.560px;">0.70</span>
<span class="t" style="left:1010.14px;top:885px;font-size:11.5px;color:#565656;letter-spacing:0.560px;">$1,000,000.00</span>
<span class="t" style="left:1176.34px;top:885px;font-size:11.5px;color:#565656;letter-spacing:0.560px;">0.90</span>
<span class="t" style="left:1240.85px;top:885px;font-size:11.5px;color:#565656;letter-spacing:0.560px;">$700,000.00</span>
<span class="t" style="left:1350.85px;top:885px;font-size:11.5px;color:#565656;letter-spacing:0.560px;">$200,000.00</span>
<span class="t" style="left:1460.85px;top:885px;font-size:11.5px;color:#565656;letter-spacing:0.560px;">$200,000.00</span>
<span class="t" style="left:1570.85px;top:885px;font-size:11.5px;color:#565656;letter-spacing:0.560px;">$900,000.00</span>
<span class="t" style="left:1708.60px;top:885px;font-size:11.5px;color:#565656;letter-spacing:0.560px;">90.00%</span>
<span class="t" style="left:1790.85px;top:885px;font-size:11.5px;color:#565656;letter-spacing:0.560px;">$100,000.00</span>
<div class="abs" style="left:97px;top:925px;width:1772px;height:1px;background:#c8c8c8"></div>
<span class="t" style="left:193.20px;top:909px;font-size:11.5px;color:#565656;">3</span>
<span class="t" style="left:260.14px;top:908px;font-size:11.5px;color:#565656;letter-spacing:0.400px;text-decoration:underline;">(0)</span>
<span class="t" style="left:290.00px;top:908px;font-size:11.5px;color:#565656;letter-spacing:0.350px;text-decoration:underline;">02-030000</span>
<span class="t" style="left:400.00px;top:909px;font-size:11.5px;color:#565656;letter-spacing:0.780px;">Concrete</span>
<span class="t" style="left:754.80px;top:909px;font-size:11.5px;color:#565656;letter-spacing:0.560px;">1</span>
<span class="t" style="left:846.34px;top:909px;font-size:11.5px;color:#565656;letter-spacing:0.560px;">0.30</span>
<span class="t" style="left:956.34px;top:909px;font-size:11.5px;color:#565656;letter-spacing:0.560px;">0.60</span>
<span class="t" style="left:1020.85px;top:909px;font-size:11.5px;color:#565656;letter-spacing:0.560px;">$850,000.00</span>
<span class="t" style="left:1176.34px;top:909px;font-size:11.5px;color:#565656;letter-spacing:0.560px;">0.90</span>
<span class="t" style="left:1240.85px;top:909px;font-size:11.5px;color:#565656;letter-spacing:0.560px;">$510,000.00</span>
<span class="t" style="left:1350.85px;top:909px;font-size:11.5px;color:#565656;letter-spacing:0.560px;">$255,000.00</span>
<span class="t" style="left:1460.85px;top:909px;font-size:11.5px;color:#565656;letter-spacing:0.560px;">$255,000.00</span>
<span class="t" style="left:1570.85px;top:909px;font-size:11.5px;color:#565656;letter-spacing:0.560px;">$765,000.00</span>
<span class="t" style="left:1708.60px;top:909px;font-size:11.5px;color:#565656;letter-spacing:0.560px;">90.00%</span>
<span class="t" style="left:1797.80px;top:909px;font-size:11.5px;color:#565656;letter-spacing:0.560px;">$85,000.00</span>
<div class="abs" style="left:97px;top:949px;width:1772px;height:1px;background:#c8c8c8"></div>
<span class="t" style="left:193.20px;top:933px;font-size:11.5px;color:#565656;">4</span>
<span class="t" style="left:260.14px;top:932px;font-size:11.5px;color:#565656;letter-spacing:0.400px;text-decoration:underline;">(0)</span>
<span class="t" style="left:290.00px;top:932px;font-size:11.5px;color:#565656;letter-spacing:0.350px;text-decoration:underline;">02-050000</span>
<span class="t" style="left:400.00px;top:933px;font-size:11.5px;color:#565656;letter-spacing:0.780px;">Metals</span>
<span class="t" style="left:754.80px;top:933px;font-size:11.5px;color:#565656;letter-spacing:0.560px;">1</span>
<span class="t" style="left:846.34px;top:933px;font-size:11.5px;color:#565656;letter-spacing:0.560px;">0.10</span>
<span class="t" style="left:956.34px;top:933px;font-size:11.5px;color:#565656;letter-spacing:0.560px;">0.50</span>
<span class="t" style="left:1020.85px;top:933px;font-size:11.5px;color:#565656;letter-spacing:0.560px;">$825,000.00</span>
<span class="t" style="left:1176.34px;top:933px;font-size:11.5px;color:#565656;letter-spacing:0.560px;">0.60</span>
<span class="t" style="left:1240.85px;top:933px;font-size:11.5px;color:#565656;letter-spacing:0.560px;">$412,500.00</span>
<span class="t" style="left:1357.80px;top:933px;font-size:11.5px;color:#565656;letter-spacing:0.560px;">$82,500.00</span>
<span class="t" style="left:1467.80px;top:933px;font-size:11.5px;color:#565656;letter-spacing:0.560px;">$82,500.00</span>
<span class="t" style="left:1570.85px;top:933px;font-size:11.5px;color:#565656;letter-spacing:0.560px;">$495,000.00</span>
<span class="t" style="left:1708.60px;top:933px;font-size:11.5px;color:#565656;letter-spacing:0.560px;">60.00%</span>
<span class="t" style="left:1790.85px;top:933px;font-size:11.5px;color:#565656;letter-spacing:0.560px;">$330,000.00</span>
<div class="abs" style="left:97px;top:973px;width:1772px;height:1px;background:#c8c8c8"></div>
<span class="t" style="left:193.20px;top:957px;font-size:11.5px;color:#565656;">5</span>
<span class="t" style="left:260.14px;top:956px;font-size:11.5px;color:#565656;letter-spacing:0.400px;text-decoration:underline;">(0)</span>
<span class="t" style="left:290.00px;top:956px;font-size:11.5px;color:#565656;letter-spacing:0.350px;text-decoration:underline;">02-061000</span>
<span class="t" style="left:400.00px;top:957px;font-size:11.5px;color:#565656;letter-spacing:0.780px;">Rough Carpentry</span>
<span class="t" style="left:754.80px;top:957px;font-size:11.5px;color:#565656;letter-spacing:0.560px;">1</span>
<span class="t" style="left:846.34px;top:957px;font-size:11.5px;color:#565656;letter-spacing:0.560px;">0.10</span>
<span class="t" style="left:956.34px;top:957px;font-size:11.5px;color:#565656;letter-spacing:0.560px;">0.50</span>
<span class="t" style="left:1020.85px;top:957px;font-size:11.5px;color:#565656;letter-spacing:0.560px;">$165,000.00</span>
<span class="t" style="left:1176.34px;top:957px;font-size:11.5px;color:#565656;letter-spacing:0.560px;">0.60</span>
<span class="t" style="left:1247.80px;top:957px;font-size:11.5px;color:#565656;letter-spacing:0.560px;">$82,500.00</span>
<span class="t" style="left:1357.80px;top:957px;font-size:11.5px;color:#565656;letter-spacing:0.560px;">$16,500.00</span>
<span class="t" style="left:1467.80px;top:957px;font-size:11.5px;color:#565656;letter-spacing:0.560px;">$16,500.00</span>
<span class="t" style="left:1577.80px;top:957px;font-size:11.5px;color:#565656;letter-spacing:0.560px;">$99,000.00</span>
<span class="t" style="left:1708.60px;top:957px;font-size:11.5px;color:#565656;letter-spacing:0.560px;">60.00%</span>
<span class="t" style="left:1797.80px;top:957px;font-size:11.5px;color:#565656;letter-spacing:0.560px;">$66,000.00</span>
<div class="abs" style="left:97px;top:997px;width:1772px;height:1px;background:#c8c8c8"></div>
<span class="t" style="left:193.20px;top:981px;font-size:11.5px;color:#565656;">6</span>
<span class="t" style="left:260.14px;top:980px;font-size:11.5px;color:#565656;letter-spacing:0.400px;text-decoration:underline;">(0)</span>
<span class="t" style="left:290.00px;top:980px;font-size:11.5px;color:#565656;letter-spacing:0.350px;text-decoration:underline;">02-099000</span>
<span class="t" style="left:400.00px;top:981px;font-size:11.5px;color:#565656;letter-spacing:0.780px;">Painting and Coating</span>
<span class="t" style="left:754.80px;top:981px;font-size:11.5px;color:#565656;letter-spacing:0.560px;">1</span>
<span class="t" style="left:846.34px;top:981px;font-size:11.5px;color:#565656;letter-spacing:0.560px;">0.15</span>
<span class="t" style="left:956.34px;top:981px;font-size:11.5px;color:#565656;letter-spacing:0.560px;">0.25</span>
<span class="t" style="left:1020.85px;top:981px;font-size:11.5px;color:#565656;letter-spacing:0.560px;">$250,000.00</span>
<span class="t" style="left:1176.34px;top:981px;font-size:11.5px;color:#565656;letter-spacing:0.560px;">0.40</span>
<span class="t" style="left:1247.80px;top:981px;font-size:11.5px;color:#565656;letter-spacing:0.560px;">$62,500.00</span>
<span class="t" style="left:1357.80px;top:981px;font-size:11.5px;color:#565656;letter-spacing:0.560px;">$37,500.00</span>
<span class="t" style="left:1467.80px;top:981px;font-size:11.5px;color:#565656;letter-spacing:0.560px;">$37,500.00</span>
<span class="t" style="left:1570.85px;top:981px;font-size:11.5px;color:#565656;letter-spacing:0.560px;">$100,000.00</span>
<span class="t" style="left:1708.60px;top:981px;font-size:11.5px;color:#565656;letter-spacing:0.560px;">40.00%</span>
<span class="t" style="left:1790.85px;top:981px;font-size:11.5px;color:#565656;letter-spacing:0.560px;">$150,000.00</span>
<div class="abs" style="left:97px;top:1021px;width:1772px;height:1px;background:#c8c8c8"></div>
<span class="t" style="left:193.20px;top:1005px;font-size:11.5px;color:#565656;">7</span>
<span class="t" style="left:260.14px;top:1004px;font-size:11.5px;color:#565656;letter-spacing:0.400px;text-decoration:underline;">(0)</span>
<span class="t" style="left:290.00px;top:1004px;font-size:11.5px;color:#565656;letter-spacing:0.350px;text-decoration:underline;">02-210000</span>
<span class="t" style="left:400.00px;top:1005px;font-size:11.5px;color:#565656;letter-spacing:0.780px;">Fire Suppression</span>
<span class="t" style="left:754.80px;top:1005px;font-size:11.5px;color:#565656;letter-spacing:0.560px;">1</span>
<span class="t" style="left:846.34px;top:1005px;font-size:11.5px;color:#565656;letter-spacing:0.560px;">0.20</span>
<span class="t" style="left:956.34px;top:1005px;font-size:11.5px;color:#565656;letter-spacing:0.560px;">1.20</span>
<span class="t" style="left:1020.85px;top:1005px;font-size:11.5px;color:#565656;letter-spacing:0.560px;">$425,000.00</span>
<span class="t" style="left:1176.34px;top:1005px;font-size:11.5px;color:#565656;letter-spacing:0.560px;">1.40</span>
<span class="t" style="left:1247.80px;top:1005px;font-size:11.5px;color:#565656;letter-spacing:0.560px;">$85,000.00</span>
<span class="t" style="left:1357.80px;top:1005px;font-size:11.5px;color:#565656;letter-spacing:0.560px;">$85,000.00</span>
<span class="t" style="left:1467.80px;top:1005px;font-size:11.5px;color:#565656;letter-spacing:0.560px;">$85,000.00</span>
<span class="t" style="left:1570.85px;top:1005px;font-size:11.5px;color:#565656;letter-spacing:0.560px;">$170,000.00</span>
<span class="t" style="left:1708.60px;top:1005px;font-size:11.5px;color:#565656;letter-spacing:0.560px;">40.00%</span>
<span class="t" style="left:1790.85px;top:1005px;font-size:11.5px;color:#565656;letter-spacing:0.560px;">$255,000.00</span>
<div class="abs" style="left:97px;top:1045px;width:1772px;height:1px;background:#c8c8c8"></div>
<span class="t" style="left:193.20px;top:1029px;font-size:11.5px;color:#565656;">8</span>
<span class="t" style="left:260.14px;top:1028px;font-size:11.5px;color:#565656;letter-spacing:0.400px;text-decoration:underline;">(0)</span>
<span class="t" style="left:290.00px;top:1028px;font-size:11.5px;color:#565656;letter-spacing:0.350px;text-decoration:underline;">02-220000</span>
<span class="t" style="left:400.00px;top:1029px;font-size:11.5px;color:#565656;letter-spacing:0.780px;">Plumbing</span>
<span class="t" style="left:754.80px;top:1029px;font-size:11.5px;color:#565656;letter-spacing:0.560px;">1</span>
<span class="t" style="left:846.34px;top:1029px;font-size:11.5px;color:#565656;letter-spacing:0.560px;">0.25</span>
<span class="t" style="left:956.34px;top:1029px;font-size:11.5px;color:#565656;letter-spacing:0.560px;">1.00</span>
<span class="t" style="left:1020.85px;top:1029px;font-size:11.5px;color:#565656;letter-spacing:0.560px;">$400,000.00</span>
<span class="t" style="left:1176.34px;top:1029px;font-size:11.5px;color:#565656;letter-spacing:0.560px;">1.25</span>
<span class="t" style="left:1279.38px;top:1029px;font-size:11.5px;color:#565656;letter-spacing:0.560px;">$0.00</span>
<span class="t" style="left:1350.85px;top:1029px;font-size:11.5px;color:#565656;letter-spacing:0.560px;">$100,000.00</span>
<span class="t" style="left:1460.85px;top:1029px;font-size:11.5px;color:#565656;letter-spacing:0.560px;">$100,000.00</span>
<span class="t" style="left:1570.85px;top:1029px;font-size:11.5px;color:#565656;letter-spacing:0.560px;">$100,000.00</span>
<span class="t" style="left:1708.60px;top:1029px;font-size:11.5px;color:#565656;letter-spacing:0.560px;">25.00%</span>
<span class="t" style="left:1790.85px;top:1029px;font-size:11.5px;color:#565656;letter-spacing:0.560px;">$300,000.00</span>
</body>
</html>
